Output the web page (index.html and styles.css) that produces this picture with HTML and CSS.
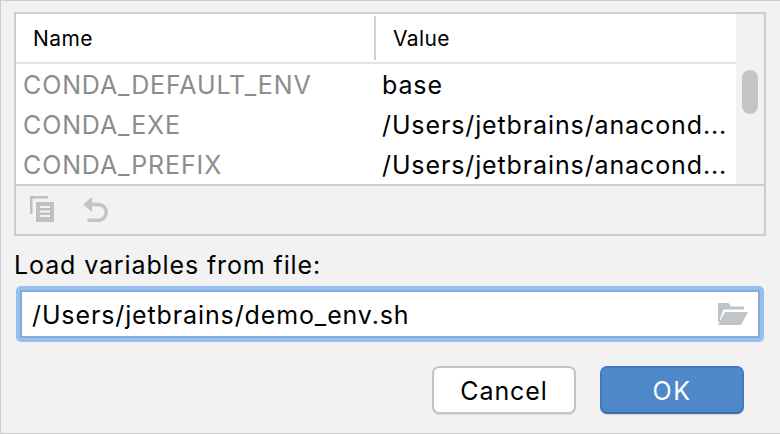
FILE: index.html
```html
<!DOCTYPE html>
<html lang="en">
<head>
    <meta charset="UTF-8">
    <title>Environment Variables</title>
    <link rel="stylesheet" href="styles.css">
</head>
<body>
    <div class="dialog">
        <div class="panel">
            <div class="table">
                <div class="table-head">
                    <div class="head-cell name-col">Name</div>
                    <div class="head-cell value-col">Value</div>
                </div>
                <div class="table-row">
                    <div class="env-name">CONDA_DEFAULT_ENV</div>
                    <div class="env-value">base</div>
                </div>
                <div class="table-row">
                    <div class="env-name">CONDA_EXE</div>
                    <div class="env-value">/Users/jetbrains/anacond...</div>
                </div>
                <div class="table-row">
                    <div class="env-name">CONDA_PREFIX</div>
                    <div class="env-value">/Users/jetbrains/anacond...</div>
                </div>
            </div>
            <div class="scrollbar">
                <div class="thumb"></div>
            </div>
            <div class="toolbar">
                <!-- copy -->
                <svg class="tool-icon" width="28" height="28" viewBox="0 0 28 28">
                    <path d="M2 2H20V4.500H4.500V20H2Z" fill="#c0c0c0"/>
                    <path fill-rule="evenodd" fill="#c0c0c0" d="M8 8H26V28H8ZM12 12V14H22V12ZM12 16.500V18.500H22V16.500ZM12 21V23H22V21Z"/>
                </svg>
                <!-- undo -->
                <svg class="tool-icon" width="28" height="28" viewBox="0 0 28 28">
                    <path d="M1 10.500L10 3V18Z" fill="#c4c4c4"/>
                    <path d="M9 10.500H16.400A7.900 7.900 0 0 1 16.400 26.300H5.500" fill="none" stroke="#c4c4c4" stroke-width="3.500"/>
                </svg>
            </div>
        </div>

        <div class="file-label">Load variables from file:</div>
        <div class="file-ring">
            <div class="file-input">
                <span class="file-path">/Users/jetbrains/demo_env.sh</span>
                <svg class="folder" width="32" height="24" viewBox="0 0 32 24">
                    <path d="M1 1H11.500L14 4.500H27V7.500H6.500L3 17V20H1Z" fill="#c0c5c9"/>
                    <path d="M8 10H31L24 23H1Z" fill="#c0c5c9"/>
                </svg>
            </div>
        </div>

        <div class="buttons">
            <div class="btn btn-cancel">Cancel</div>
            <div class="btn btn-ok">OK</div>
        </div>
    </div>
</body>
</html>
```

FILE: styles.css
```css
html, body {
    margin: 0;
    padding: 0;
}

body {
    font-family: Inter, "Liberation Sans", sans-serif;
    font-size: 25px;
    letter-spacing: 0.88px;
    color: #000;
    overflow: hidden;
}

.dialog {
    box-sizing: border-box;
    width: 780px;
    height: 434px;
    padding: 11px 0 0 13px;
    background-color: #f2f2f2;
    border: 1px solid #cdcdcd;
    border-right: none;
}

/* table panel */
.panel {
    box-sizing: border-box;
    width: 752px;
    height: 224px;
    border: 2px solid #cdcdcd;
    display: grid;
    grid-template-columns: 720px 28px;
    grid-template-rows: 170px 50px;
}

.table {
    background-color: #fff;
    overflow: hidden;
}

.table-head {
    display: flex;
    height: 48px;
    border-bottom: 2px solid #e4e4e4;
    align-items: center;
    font-size: 21px;
    letter-spacing: 0.4px;
}

.head-cell {
    box-sizing: border-box;
    height: 44px;
    line-height: 46px;
}

.name-col {
    width: 360px;
    padding-left: 17px;
    border-right: 2px solid #d0d0d0;
}

.value-col {
    padding-left: 17px;
}

.table-row {
    display: flex;
    height: 40px;
    line-height: 42px;
}

.env-name {
    width: 366px;
    padding-left: 7px;
    box-sizing: border-box;
    color: #8c8c8c;
}

.env-value {
    white-space: nowrap;
}

.scrollbar {
    padding: 56px 6px 0;
}

.thumb {
    width: 16px;
    height: 44px;
    border-radius: 8px;
    background-color: #c4c4c4;
}

.toolbar {
    grid-column: 1 / 3;
    display: flex;
    align-items: flex-start;
    gap: 26px;
    padding: 8px 0 0 12px;
    border-top: 2px solid #cdcdcd;
}

.tool-icon {
    display: block;
}

/* load from file */
.file-label {
    margin-top: 14px;
    height: 30px;
    line-height: 30px;
    padding-left: 0;
}

.file-ring {
    box-sizing: border-box;
    width: 748px;
    height: 56px;
    margin: 6px 0 0 2px;
    padding: 4px;
    border-radius: 5px;
    background-color: #97c0f0;
}

.file-input {
    box-sizing: border-box;
    height: 48px;
    display: flex;
    align-items: center;
    justify-content: space-between;
    padding: 0 9px 0 10px;
    background-color: #fff;
    border: 2px solid #85abdc;
}

.file-path {
    padding-top: 2px;
}

.folder {
    display: block;
}

.buttons {
    display: flex;
    justify-content: flex-end;
    gap: 24px;
    margin-top: 24px;
    padding-right: 36px;
}

.btn {
    box-sizing: border-box;
    width: 144px;
    height: 48px;
    line-height: 46px;
    text-align: center;
    border-radius: 7px;
    box-shadow: 0 1px 1px rgba(0, 0, 0, 0.1);
}

.btn-cancel {
    background-color: #fff;
    border: 2px solid #c4c4c4;
}

.btn-ok {
    color: #fff;
    letter-spacing: 1.5px;
    background: linear-gradient(180deg, #5089cb 0%, #4c87c9 100%);
    border: 2px solid #4279bd;
    border-bottom-color: #3a6dae;
}
```
